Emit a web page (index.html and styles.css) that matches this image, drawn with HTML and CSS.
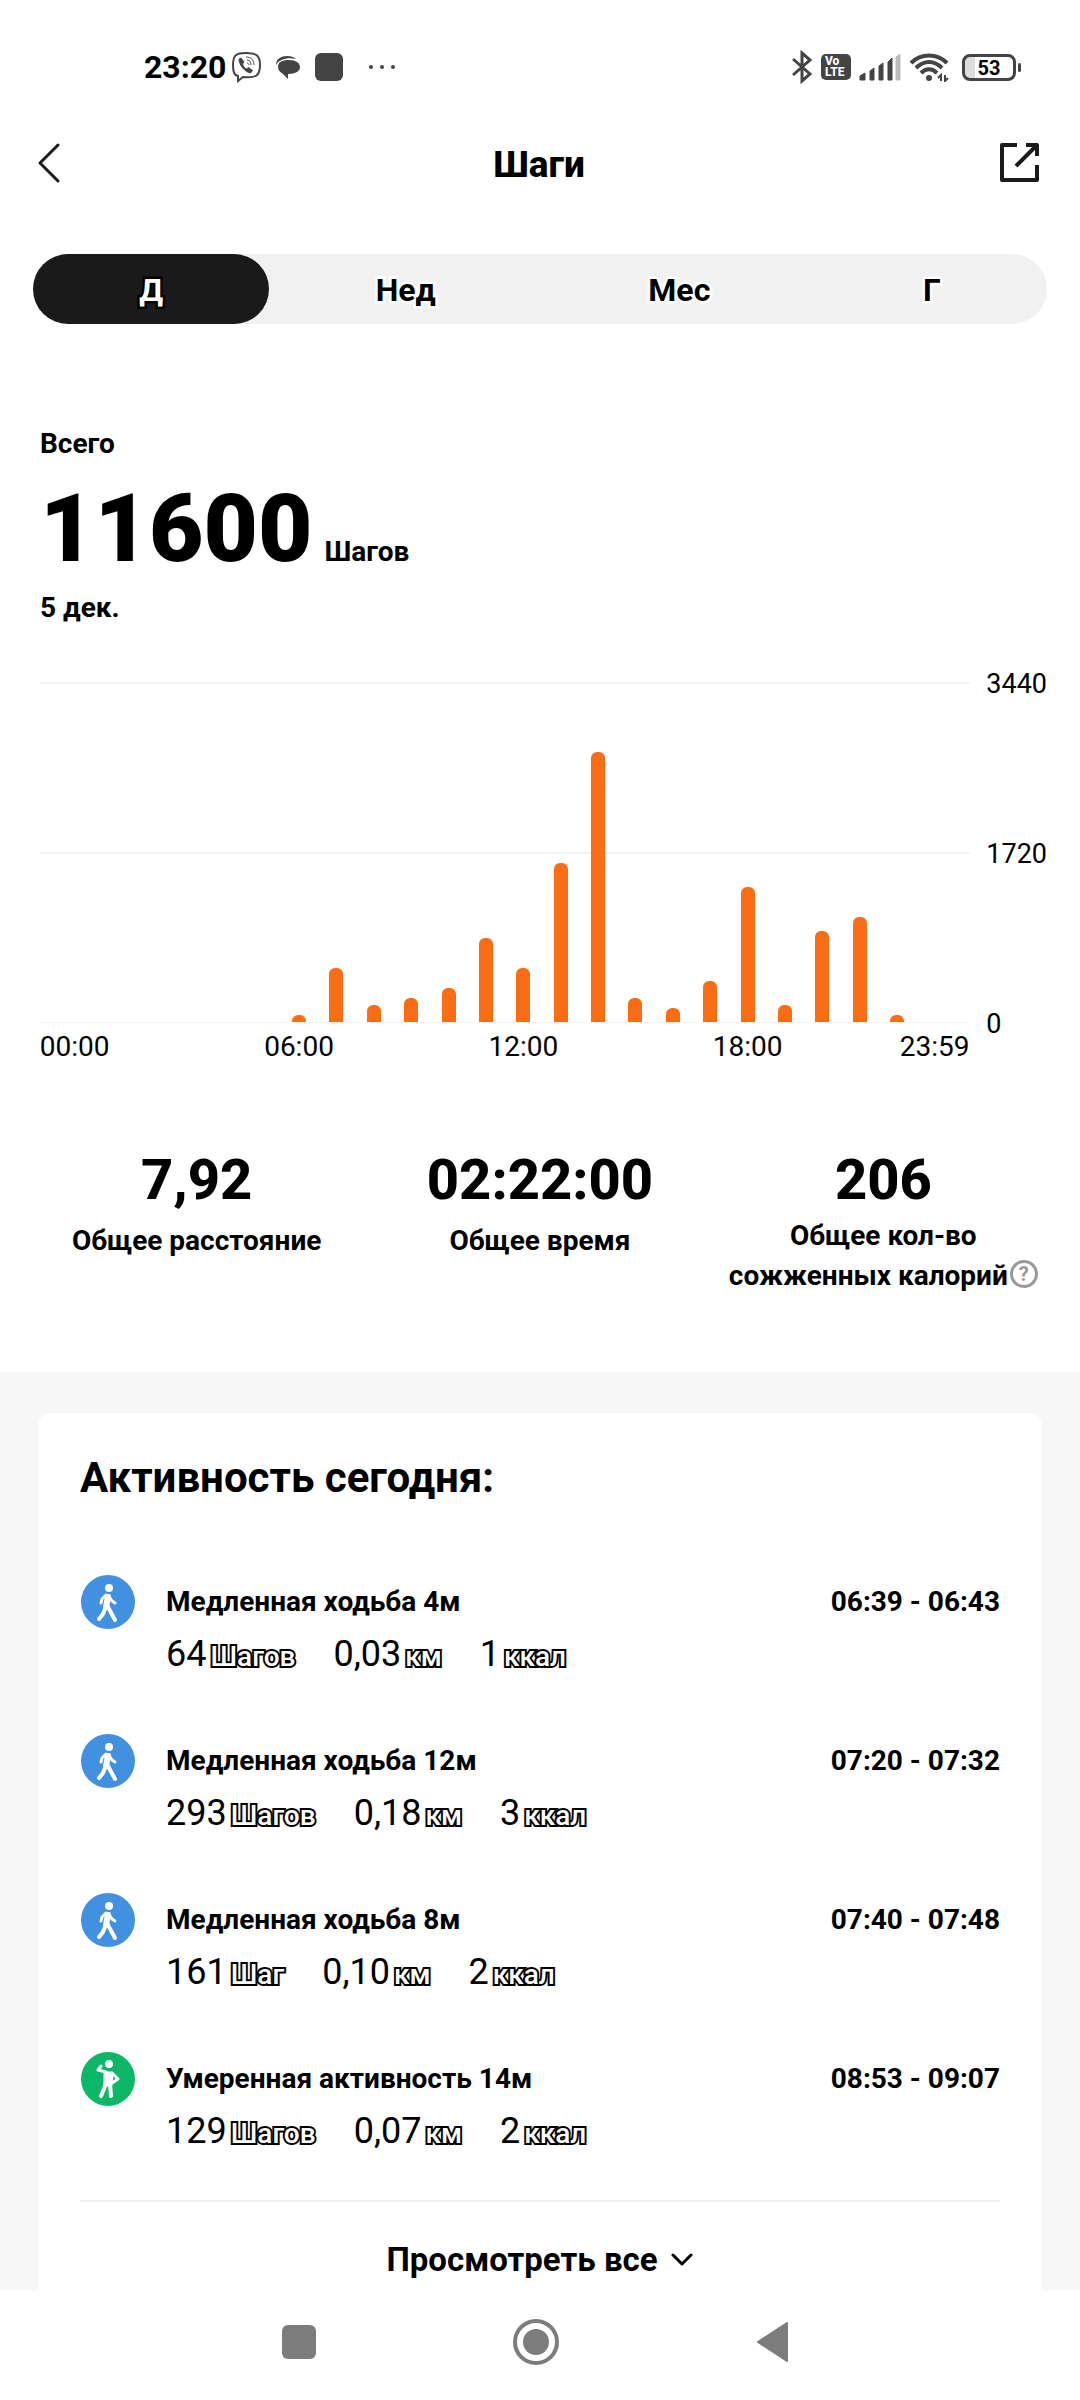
FILE: index.html
```html
<!DOCTYPE html>
<html lang="ru">
<head>
    <meta charset="UTF-8">
    <meta name="viewport" content="width=device-width, initial-scale=1.0">
    <title>Шаги</title>
    <link rel="stylesheet" href="styles.css">
</head>
<body>
    <!-- Shared icons -->
    <svg class="sprite" aria-hidden="true">
        <symbol id="icon-walk" viewBox="0 0 54 54">
            <circle cx="27" cy="27" r="27" fill="#4290e0"/>
            <circle cx="28" cy="13" r="4" fill="#fff"/>
            <path d="M27 32L34 45M24 34L22 39L18 44" fill="none" stroke="#fff" stroke-width="4" stroke-linecap="round" stroke-linejoin="round"/>
            <path d="M26 21L28 21L26 33L24 32Z" fill="#fff" stroke="#fff" stroke-width="4" stroke-linejoin="round"/>
            <path d="M25 20L21 24L20 28M29 23L31 26L34 28" fill="none" stroke="#fff" stroke-width="3" stroke-linecap="round" stroke-linejoin="round"/>
        </symbol>
        <symbol id="icon-active" viewBox="0 0 54 54">
            <circle cx="27" cy="27" r="27" fill="#0cb867"/>
            <circle cx="28" cy="12" r="4" fill="#fff"/>
            <path d="M24 21H31L30 33H24Z" fill="#fff" stroke="#fff" stroke-width="3" stroke-linejoin="round"/>
            <path d="M25 20L17 18L20 14M31 21L37 27L31 31" fill="none" stroke="#fff" stroke-width="3" stroke-linecap="round" stroke-linejoin="round"/>
            <path d="M25 32L20 44M29 32L30 44" fill="none" stroke="#fff" stroke-width="4" stroke-linecap="round"/>
        </symbol>
    </svg>

    <!-- Phone status bar -->
    <div class="status-bar">
        <div class="status-left">
            <span class="clock">23:20</span>
            <svg class="viber" width="30" height="32" viewBox="0 0 30 32" fill="none" stroke="#444" stroke-width="2">
                <path d="M15 2C5 2 2 4 2 14c0 7 1 10 5 11v5l5-4c13 1 17-1 17-12C29 4 25 2 15 2Z"/>
                <path d="M8 8l2-1 3 4-1.500 2c1 3 2 4 4 5l2-1.500 4 3-2 2.500C14 21 8 14 8 8Z" fill="#444" stroke-width="1"/>
                <path d="M15 6c5 0 8 3 8 8M16 9c3 0 4 2 4 5M16 12c1 0 2 1 2 2" stroke-width="1"/>
            </svg>
            <svg class="chat" width="26" height="24" viewBox="0 0 26 24" fill="#444">
                <path d="M14 5C7 5 3 7 3 12c0 3 2 5 5 7l5 5v-5c8 0 12-3 12-7s-4-7-11-7Z"/>
                <path d="M1 10C1 4 6 1 12 1c4 0 7 1 9 3C13 2 4 4 1 10Z"/>
            </svg>
            <span class="app-square"></span>
            <svg class="dots" width="28" height="6" viewBox="0 0 28 6" fill="#444">
                <circle cx="3" cy="3" r="2"/><circle cx="14" cy="3" r="2"/><circle cx="25" cy="3" r="2"/>
            </svg>
        </div>
        <div class="status-right">
            <svg width="22" height="34" viewBox="0 0 22 34" fill="none" stroke="#444" stroke-width="3">
                <path d="M2 9L19 24L11 31V3L19 10L2 25"/>
            </svg>
            <span class="volte"><span>Vo</span><span>LTE</span></span>
            <svg width="42" height="28" viewBox="0 0 42 28" fill="#444">
                <path d="M1 27v-4l5-3v7ZM11 27V18l4-3v12ZM20 27V13l4-3v17ZM29 27V9l4-4v22Z" stroke="#444" stroke-linejoin="round"/>
                <path d="M37 27V4l4-3v26Z" fill="#bbb" stroke="#bbb" stroke-linejoin="round"/>
            </svg>
            <svg width="40" height="30" viewBox="0 0 40 30" fill="none" stroke="#444" stroke-width="4">
                <path d="M2 11C12 1 28 1 38 11M7 16C15 8 25 8 33 16M12 21C17 16 23 16 28 21"/>
                <circle cx="20" cy="26" r="3" fill="#444" stroke="none"/>
                <path d="M32 29v-6l-3 3M36 23v6l3-3" stroke-width="2"/>
            </svg>
            <span class="battery">53</span>
        </div>
    </div>

    <header class="header">
        <button class="icon-btn" aria-label="Назад">
            <svg width="24" height="44" viewBox="0 0 24 44" fill="none" stroke="#1a1a1a" stroke-width="3" stroke-linecap="round" stroke-linejoin="round">
                <path d="M21 4L3 22L21 40"/>
            </svg>
        </button>
        <h1>Шаги</h1>
        <button class="icon-btn" aria-label="Поделиться">
            <svg width="42" height="42" viewBox="0 0 42 42" fill="none" stroke="#1a1a1a" stroke-width="4" stroke-linejoin="round">
                <path d="M18 3H3V38H38V23M27 3H38V14M37 4L17 24"/>
            </svg>
        </button>
    </header>

    <nav class="tabs">
        <button class="tab active">Д</button>
        <button class="tab">Нед</button>
        <button class="tab">Мес</button>
        <button class="tab">Г</button>
    </nav>

    <section class="summary">
        <p>Всего</p>
        <div class="total"><strong>11600</strong><span>Шагов</span></div>
        <p>5 дек.</p>
    </section>

    <section class="chart">
        <div class="plot">
            <div class="bars">
                <span></span><span></span><span></span><span></span><span></span><span></span>
                <span class="bar" style="height: 2%"></span>
                <span class="bar" style="height: 16%"></span>
                <span class="bar" style="height: 5%"></span>
                <span class="bar" style="height: 7%"></span>
                <span class="bar" style="height: 10%"></span>
                <span class="bar" style="height: 25%"></span>
                <span class="bar" style="height: 16%"></span>
                <span class="bar" style="height: 47%"></span>
                <span class="bar" style="height: 80%"></span>
                <span class="bar" style="height: 7%"></span>
                <span class="bar" style="height: 4%"></span>
                <span class="bar" style="height: 12%"></span>
                <span class="bar" style="height: 40%"></span>
                <span class="bar" style="height: 5%"></span>
                <span class="bar" style="height: 27%"></span>
                <span class="bar" style="height: 31%"></span>
                <span class="bar" style="height: 2%"></span>
                <span></span>
            </div>
            <div class="hours">
                <span class="h0">00:00</span>
                <span class="h6">06:00</span>
                <span class="h12">12:00</span>
                <span class="h18">18:00</span>
                <span class="h23">23:59</span>
            </div>
        </div>
        <div class="scale">
            <span>3440</span>
            <span>1720</span>
            <span>0</span>
        </div>
    </section>

    <section class="stats">
        <div class="stat">
            <strong>7,92</strong>
            <p>Общее расстояние</p>
        </div>
        <div class="stat">
            <strong>02:22:00</strong>
            <p>Общее время</p>
        </div>
        <div class="stat">
            <strong>206</strong>
            <p class="two-lines">Общее кол-во<br>сожженных калорий<button class="help" aria-label="Справка">?</button></p>
        </div>
    </section>

    <main class="content">
        <div class="card">
            <h2>Активность сегодня:</h2>
            <ul class="activities">
                <li class="activity">
                    <svg class="activity-icon"><use href="#icon-walk"/></svg>
                    <div class="info">
                        <div class="info-top"><span>Медленная ходьба 4м</span><span>06:39 - 06:43</span></div>
                        <div class="metrics">
                            <span>64<small>Шагов</small></span>
                            <span>0,03<small>км</small></span>
                            <span>1<small>ккал</small></span>
                        </div>
                    </div>
                </li>
                <li class="activity">
                    <svg class="activity-icon"><use href="#icon-walk"/></svg>
                    <div class="info">
                        <div class="info-top"><span>Медленная ходьба 12м</span><span>07:20 - 07:32</span></div>
                        <div class="metrics">
                            <span>293<small>Шагов</small></span>
                            <span>0,18<small>км</small></span>
                            <span>3<small>ккал</small></span>
                        </div>
                    </div>
                </li>
                <li class="activity">
                    <svg class="activity-icon"><use href="#icon-walk"/></svg>
                    <div class="info">
                        <div class="info-top"><span>Медленная ходьба 8м</span><span>07:40 - 07:48</span></div>
                        <div class="metrics">
                            <span>161<small>Шаг</small></span>
                            <span>0,10<small>км</small></span>
                            <span>2<small>ккал</small></span>
                        </div>
                    </div>
                </li>
                <li class="activity">
                    <svg class="activity-icon"><use href="#icon-active"/></svg>
                    <div class="info">
                        <div class="info-top"><span>Умеренная активность 14м</span><span>08:53 - 09:07</span></div>
                        <div class="metrics">
                            <span>129<small>Шагов</small></span>
                            <span>0,07<small>км</small></span>
                            <span>2<small>ккал</small></span>
                        </div>
                    </div>
                </li>
            </ul>
            <button class="view-all">Просмотреть все
                <svg width="24" height="14" viewBox="0 0 24 14" fill="none" stroke="#000" stroke-width="3" stroke-linecap="round" stroke-linejoin="round">
                    <path d="M3 2L12 11L21 2"/>
                </svg>
            </button>
        </div>
    </main>

    <!-- Android navigation -->
    <nav class="system-nav">
        <button aria-label="Недавние">
            <svg width="48" height="48" viewBox="0 0 48 48" fill="#7c7c7c"><rect x="7" y="7" width="34" height="34" rx="6"/></svg>
        </button>
        <button aria-label="Домой">
            <svg width="48" height="48" viewBox="0 0 48 48" fill="#7c7c7c"><circle cx="24" cy="24" r="21" fill="none" stroke="#7c7c7c" stroke-width="4"/><circle cx="24" cy="24" r="13"/></svg>
        </button>
        <button aria-label="Назад">
            <svg width="48" height="48" viewBox="0 0 48 48" fill="#7c7c7c" stroke="#7c7c7c" stroke-width="2" stroke-linejoin="round"><path d="M38 5V43L9 24Z"/></svg>
        </button>
    </nav>
</body>
</html>
```
FILE: styles.css
```css
* {
    box-sizing: border-box;
}

body {
    margin: 0;
    min-height: 100vh;
    display: flex;
    flex-direction: column;
    background-color: #fff;
    color: #000;
    font-family: Roboto, "Liberation Sans", sans-serif;
    font-size: 28px;
    font-weight: 700;
    line-height: 40px;
}

h1,
h2,
p,
ul {
    margin: 0;
    padding: 0;
}

button {
    padding: 0;
    border: none;
    background: none;
    color: inherit;
    font: inherit;
    cursor: pointer;
}

svg {
    display: block;
}

.sprite {
    position: absolute;
    width: 0;
    height: 0;
}

/* Status bar */
.status-bar {
    display: flex;
    justify-content: space-between;
    height: 134px;
    padding: 0 59px 0 144px;
}

.status-left,
.status-right {
    display: flex;
    align-items: center;
    height: 134px;
}

.clock {
    font-size: 32px;
    margin-right: 5px;
}

.chat {
    margin: 0 14px;
}

.app-square {
    width: 28px;
    height: 28px;
    margin-right: 25px;
    border-radius: 6px;
    background-color: #444;
}

.status-right {
    gap: 8px;
}

.volte {
    display: flex;
    flex-direction: column;
    width: 30px;
    height: 26px;
    padding: 2px 4px;
    border-radius: 5px;
    background-color: #444;
    color: #fff;
    font-size: 12px;
    font-weight: 800;
    line-height: 11px;
}

.battery {
    position: relative;
    width: 54px;
    height: 27px;
    margin: 0 5px;
    border: 3px solid #444;
    border-radius: 8px;
    background: linear-gradient(90deg, #ddd 10px, #fff 10px);
    font-size: 20px;
    line-height: 22px;
    text-align: center;
}

.battery::after {
    content: "";
    position: absolute;
    top: 6px;
    right: -8px;
    width: 3px;
    height: 9px;
    border-radius: 2px;
    background-color: #444;
}

/* Header */
.header {
    display: flex;
    align-items: center;
    justify-content: space-between;
    height: 58px;
    padding: 0 39px 0 37px;
}

.header h1 {
    padding-top: 3px;
    font-size: 37px;
    font-weight: 800;
}

.icon-btn {
    display: flex;
    width: 42px;
}

/* Period switch */
.tabs {
    display: flex;
    height: 70px;
    margin: 62px 33px 0;
    border-radius: 35px;
    background-color: #f1f1f1;
}

.tab {
    flex: 1 1 auto;
    padding-top: 2px;
    border-radius: 35px;
    font-size: 32px;
    paint-order: stroke;
    -webkit-text-stroke: 5px #fff;
}

.tab.active {
    background-color: #1a1a1a;
    color: #fff;
    -webkit-text-stroke-color: #000;
}

/* Total steps */
.summary {
    padding: 100px 40px 0;
}

.total {
    display: flex;
    align-items: baseline;
    gap: 12px;
    height: 124px;
    line-height: 130px;
}

.total strong {
    font-size: 94px;
    font-weight: 900;
}

/* Chart */
.chart {
    display: flex;
    gap: 16px;
    padding: 54px 33px 0 40px;
    font-size: 27px;
    font-weight: 400;
}

.plot {
    flex: 1;
}

.bars,
.hours {
    display: grid;
    grid-template-columns: repeat(24, minmax(0, 1fr));
    justify-items: center;
    padding: 0 17px 0 16px;
}

.bars {
    align-items: end;
    height: 341px;
    border-top: 2px solid #f4f4f4;
    border-bottom: 1px solid #f4f4f4;
    background: linear-gradient(#f4f4f4, #f4f4f4) 0 50% / 100% 2px no-repeat;
}

.bar {
    width: 14px;
    border-radius: 6px 6px 0 0;
    background-color: #f96d15;
}

.hours {
    padding-top: 4px;
    font-size: 28px;
}

.hours span {
    grid-row: 1;
}

.h0 { grid-column: 1; }
.h6 { grid-column: 7; }
.h12 { grid-column: 13; }
.h18 { grid-column: 19; }
.h23 { grid-column: 24; }

.scale {
    display: flex;
    flex-direction: column;
    justify-content: space-between;
    height: 380px;
    margin-top: -18px;
}

/* Totals */
.stats {
    display: flex;
    padding: 78px 25px 76px;
    text-align: center;
}

.stat {
    flex: 1;
}

.stat strong {
    display: block;
    margin-bottom: 1px;
    font-size: 56px;
    font-weight: 800;
    line-height: 70px;
}

.stat p {
    line-height: 50px;
}

.stat .two-lines {
    line-height: 40px;
    white-space: nowrap;
}

.help {
    width: 28px;
    height: 28px;
    margin-left: 2px;
    border: 3px solid #999;
    border-radius: 50%;
    color: #999;
    font-size: 20px;
    line-height: 22px;
    vertical-align: 4px;
}

/* Activity list */
.content {
    flex: 1;
    padding: 41px 38px 0;
    background-color: #f7f7f7;
}

.card {
    height: 100%;
    padding: 40px 42px 0;
    border-radius: 14px 14px 0 0;
    background-color: #fff;
}

.card h2 {
    font-size: 42px;
    line-height: 50px;
}

.activities {
    padding: 72px 0 25px;
    border-bottom: 2px solid #f1f1f1;
    list-style: none;
}

.activity {
    display: flex;
    gap: 31px;
    height: 159px;
    padding-left: 1px;
}

.activity:last-child {
    height: 123px;
}

.activity-icon {
    width: 54px;
    height: 54px;
}

.info {
    flex: 1;
    padding-top: 7px;
}

.info-top {
    display: flex;
    justify-content: space-between;
}

.metrics {
    display: flex;
    gap: 38px;
    padding-top: 12px;
    font-size: 36px;
    font-weight: 400;
}

.metrics small {
    margin-left: 4px;
    color: #fff;
    font-size: 28px;
    font-weight: 500;
    paint-order: stroke;
    -webkit-text-stroke: 4px #000;
}

.view-all {
    display: flex;
    align-items: center;
    justify-content: center;
    gap: 12px;
    width: 100%;
    height: 88px;
    padding-top: 28px;
    font-size: 33px;
}

/* Bottom navigation */
.system-nav {
    display: flex;
    justify-content: center;
    gap: 189px;
    padding: 28px 8px 34px 0;
    background-color: #fff;
}
```
